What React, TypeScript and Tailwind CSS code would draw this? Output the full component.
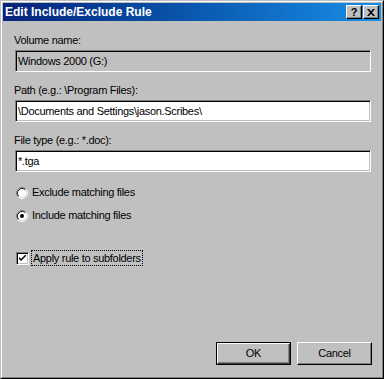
import React from 'react';

const font = { fontFamily: '"Liberation Sans", Arial, sans-serif' };

function Field({ value, disabled }: { value: string; disabled?: boolean }) {
  return (
    <div
      className={`ml-px mt-[3px] w-[356px] h-[22px] border border-t-[#808080] border-l-[#808080] border-r-white border-b-white shadow-[inset_1px_1px_#000,inset_-1px_-1px_#c0c0c0] flex items-center pl-[2px] text-[11px] tracking-[-0.3px] text-black ${
        disabled ? 'bg-[#c0c0c0]' : 'bg-white'
      }`}
    >
      {value}
    </div>
  );
}

function Radio({ checked }: { checked?: boolean }) {
  return (
    <svg width="12" height="12" viewBox="0 0 12 12" className="shrink-0">
      <circle cx="6" cy="6" r="4.5" fill="white" />
      <path d="M2.11 9.89 A5.5 5.5 0 0 1 9.89 2.11" fill="none" stroke="#808080" strokeWidth="1" />
      <path d="M9.89 2.11 A5.5 5.5 0 0 1 2.11 9.89" fill="none" stroke="#ffffff" strokeWidth="1" />
      <path d="M2.82 9.18 A4.5 4.5 0 0 1 9.18 2.82" fill="none" stroke="#202020" strokeWidth="1" />
      <path d="M9.18 2.82 A4.5 4.5 0 0 1 2.82 9.18" fill="none" stroke="#dfdfdf" strokeWidth="1" />
      {checked && <circle cx="6" cy="6" r="2" fill="black" />}
    </svg>
  );
}

function Checkbox() {
  return (
    <div className="w-[13px] h-[13px] shrink-0 bg-white border border-t-[#808080] border-l-[#808080] border-r-white border-b-white shadow-[inset_1px_1px_#000,inset_-1px_-1px_#c0c0c0] flex items-center justify-center">
      <svg width="7" height="7" viewBox="0 0 7 7">
        <path d="M0 2 L0 4 L2 6 L7 1 L7 -1 L2 4 Z" fill="black" />
      </svg>
    </div>
  );
}

function TitleButton({ children }: { children: React.ReactNode }) {
  return (
    <div className="w-[16px] h-[14px] bg-[#c0c0c0] border border-t-white border-l-white border-r-black border-b-black shadow-[inset_-1px_-1px_#808080] flex items-center justify-center text-black">
      {children}
    </div>
  );
}

export default function App() {
  return (
    <div style={font} className="w-[384px] h-[379px] bg-[#c0c0c0] border border-t-[#c0c0c0] border-l-[#c0c0c0] border-r-black border-b-black">
      <div className="h-full border border-t-white border-l-white border-r-[#808080] border-b-[#808080] p-px flex flex-col">
        <div className="h-[18px] shrink-0 bg-linear-to-r from-[#08227a] to-[#1a8ee6] flex items-center pl-[2px] pr-[2px]">
          <span className="text-white font-bold text-[12px] leading-none">Edit Include/Exclude Rule</span>
          <div className="ml-auto flex gap-px">
            <TitleButton>
              <span className="font-bold text-[11px] leading-none">?</span>
            </TitleButton>
            <TitleButton>
              <svg width="8" height="7" viewBox="0 0 8 7">
                <path d="M0 0h2l2 2.3L6 0h2L5 3.5 8 7H6L4 4.7 2 7H0l3-3.5z" fill="black" />
              </svg>
            </TitleButton>
          </div>
        </div>

        <div className="flex-1 flex flex-col pl-[11px] pr-[9px] pb-[11px] text-[11px] tracking-[-0.3px] text-black">
          <div className="mt-[13px] h-[13px] leading-[13px]">Volume name:</div>
          <Field value="Windows 2000 (G:)" disabled />

          <div className="mt-[12px] h-[13px] leading-[13px]">Path (e.g.: \Program Files):</div>
          <Field value="\Documents and Settings\jason.Scribes\" />

          <div className="mt-[12px] h-[13px] leading-[13px]">File type (e.g.: *.doc):</div>
          <Field value="*.tga" />

          <div className="mt-[14px] h-[13px] flex items-center gap-[4px] pl-[2px]">
            <Radio />
            <span className="leading-[13px]">Exclude matching files</span>
          </div>
          <div className="mt-[10px] h-[13px] flex items-center gap-[4px] pl-[2px]">
            <Radio checked />
            <span className="leading-[13px]">Include matching files</span>
          </div>

          <div className="mt-[28px] h-[16px] flex items-center gap-[2px] pl-[2px]">
            <Checkbox />
            <span className="border border-dotted border-black px-px leading-[14px]">Apply rule to subfolders</span>
          </div>

          <div className="mt-auto flex justify-end gap-[6px]">
            <div className="w-[75px] h-[23px] border border-black">
              <div className="h-full border border-t-white border-l-white border-r-[#404040] border-b-[#404040] shadow-[inset_-1px_-1px_#808080] flex items-center justify-center">
                OK
              </div>
            </div>
            <div className="w-[75px] h-[23px] border border-t-white border-l-white border-r-black border-b-black shadow-[inset_-1px_-1px_#808080] flex items-center justify-center">
              Cancel
            </div>
          </div>
        </div>
      </div>
    </div>
  );
}
